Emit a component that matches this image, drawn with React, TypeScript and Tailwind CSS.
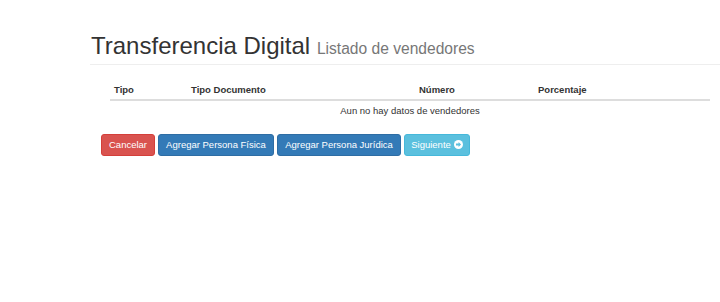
import React from "react";

const font = { fontFamily: '"Liberation Sans", Arial, sans-serif' };

function ArrowCircle() {
  return (
    <svg width="9" height="9" viewBox="0 0 16 16" className="inline-block ml-[3px] -mt-[2px] align-middle">
      <circle cx="8" cy="8" r="8" fill="#ffffff" />
      <path d="M3.5 6.4h4.6V3.6l4.4 4.4-4.4 4.4V9.6H3.5z" fill="#5bc0de" />
    </svg>
  );
}

export default function App() {
  const columns = ["Tipo", "Tipo Documento", "Número", "Porcentaje"];

  return (
    <div className="w-[720px] h-[302px] bg-white text-[#333] overflow-hidden" style={font}>
      <div className="pt-[33px] pl-[90px]">
        <h1 className="pl-[1px] pb-[2px] border-b border-[#eee] text-[24px] leading-[26px] font-normal">
          Transferencia Digital{" "}
          <small className="text-[15.6px] text-[#777]">Listado de vendedores</small>
        </h1>
      </div>

      <div className="ml-[110px] w-[600px] mt-[14px] text-[9.5px] leading-[14px]">
        <div className="grid grid-cols-[77px_228px_119px_176px] border-b-2 border-[#ddd]">
          {columns.map((c) => (
            <div key={c} className="px-[4px] pt-[4px] pb-[2px] font-bold">
              {c}
            </div>
          ))}
        </div>
        <div className="pt-[3px] pb-[3px] text-center">Aun no hay datos de vendedores</div>
      </div>

      <div className="mt-[13px] ml-[101px] flex gap-[3px] text-[9.5px] leading-[14px] text-white">
        <button className="w-[54px] py-[3px] border border-[#d43f3a] bg-[#d9534f] rounded-[3px]">
          Cancelar
        </button>
        <button className="w-[116px] py-[3px] border border-[#2e6da4] bg-[#337ab7] rounded-[3px]">
          Agregar Persona Física
        </button>
        <button className="w-[124px] py-[3px] border border-[#2e6da4] bg-[#337ab7] rounded-[3px]">
          Agregar Persona Jurídica
        </button>
        <button className="w-[66px] py-[3px] border border-[#46b8da] bg-[#5bc0de] rounded-[3px]">
          Siguiente
          <ArrowCircle />
        </button>
      </div>
    </div>
  );
}
